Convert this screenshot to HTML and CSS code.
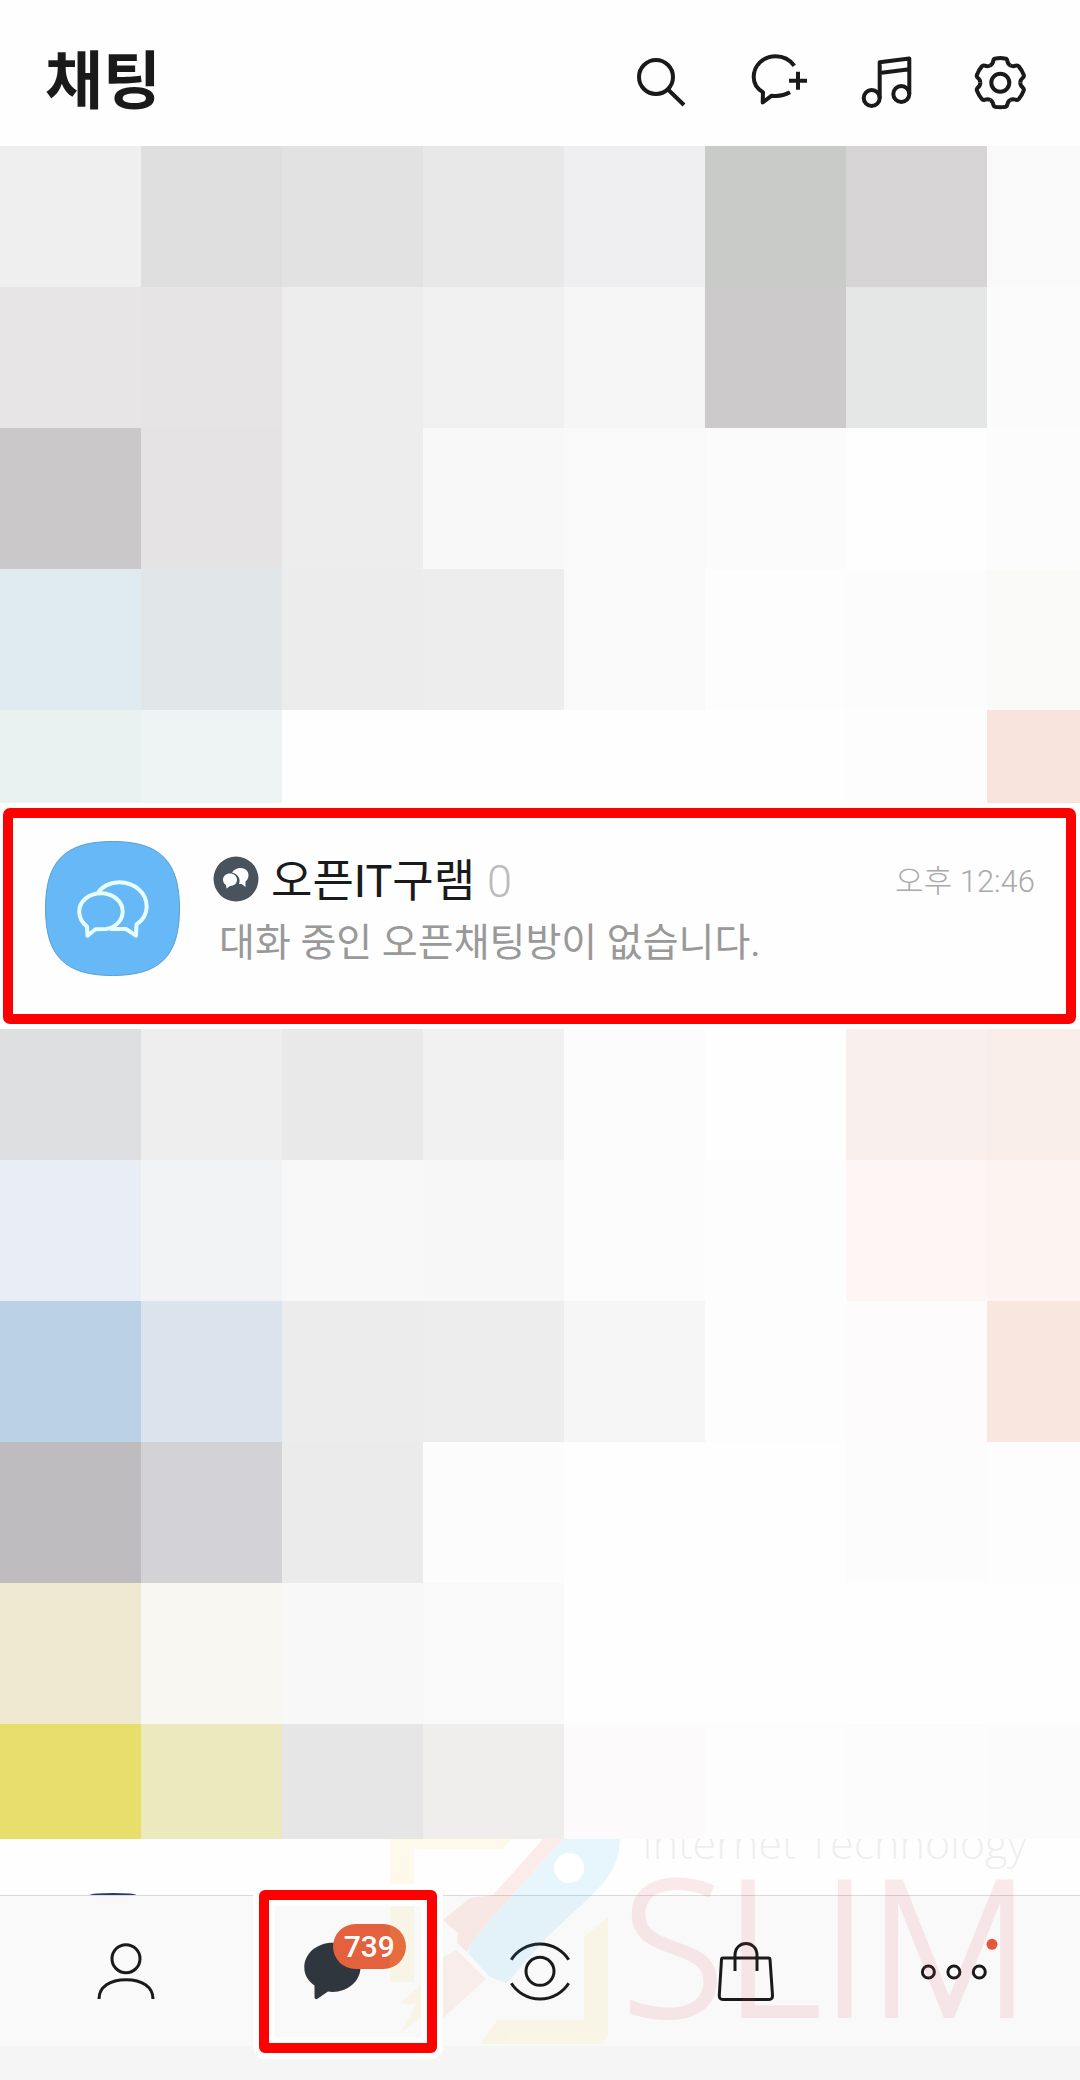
FILE: index.html
```html
<!DOCTYPE html>
<html lang="ko">
<head>
<meta charset="utf-8">
<meta name="viewport" content="width=device-width, initial-scale=1">
<title>채팅</title>
<link rel="stylesheet" href="styles.css">
</head>
<body>
<header class="header">
  <h1 class="title">채팅</h1>
  <div class="actions">
    <button class="action" aria-label="검색">
      <svg viewBox="0 0 112 112"><circle cx="48" cy="51" r="17"/><path d="M60 63.500L76 79"/></svg>
    </button>
    <button class="action" aria-label="새 채팅">
      <svg viewBox="0 0 112 112"><path stroke-linejoin="round" d="M74.300 39.700C70 34 63.500 30.300 55.700 30.300C43 30.300 33.700 39.500 33.700 51C33.700 57.500 37.500 63 43 66.200L42.700 76.500L51.700 69.700C58 70.800 65 69 70 66.300"/><path d="M69 54.700H87M78 45.700V63.700"/></svg>
    </button>
    <button class="action" aria-label="음악">
      <svg viewBox="0 0 112 112"><circle cx="39.700" cy="72" r="8"/><circle cx="69.300" cy="68" r="8"/><path stroke-linejoin="round" d="M47.700 72V36.300L77.300 32.500V68M47.700 47L77.300 43.300"/></svg>
    </button>
    <button class="action" aria-label="설정">
      <svg viewBox="0 0 112 112">
        <defs><path id="tooth" d="M-10 -17.300C-7.800 -18.500 -7.300 -20 -7 -22Q-6.600 -24 -4.600 -24.200Q0 -25 4.600 -24.200Q6.600 -24 7 -22C7.300 -20 7.800 -18.500 10 -17.300"/></defs>
        <g transform="translate(56.300 56.700)">
          <use href="#tooth"/><use href="#tooth" transform="rotate(60)"/><use href="#tooth" transform="rotate(120)"/><use href="#tooth" transform="rotate(180)"/><use href="#tooth" transform="rotate(240)"/><use href="#tooth" transform="rotate(300)"/>
          <circle r="9"/>
        </g>
      </svg>
    </button>
  </div>
</header>

<main>
  <div class="mosaic mosaic-top" aria-hidden="true">
    <i style="background:#efefef"></i><i style="background:#dedede"></i><i style="background:#e2e2e2"></i><i style="background:#e8e8e8"></i><i style="background:#efeff1"></i><i style="background:#c9cbc9"></i><i style="background:#d7d4d5"></i><i style="background:#f9f9f9"></i>
    <i style="background:#e7e5e6"></i><i style="background:#e6e4e5"></i><i style="background:#ededed"></i><i style="background:#f0f0f0"></i><i style="background:#f6f6f6"></i><i style="background:#cdcacb"></i><i style="background:#e5e7e6"></i><i style="background:#fbfbfb"></i>
    <i style="background:#cac8c9"></i><i style="background:#e5e3e4"></i><i style="background:#ededed"></i><i style="background:#f8f8f8"></i><i style="background:#f9f9f9"></i><i style="background:#fbfbfb"></i><i style="background:#fefefe"></i><i style="background:#fdfcfd"></i>
    <i style="background:#e0ebf1"></i><i style="background:#e1e7e9"></i><i style="background:#ececec"></i><i style="background:#ededed"></i><i style="background:#f9f9f9"></i><i style="background:#fdfdfd"></i><i style="background:#fcfcfc"></i><i style="background:#fafaf8"></i>
    <i style="background:#e9f2f0"></i><i style="background:#eef3f4"></i><i style="background:#fefefe"></i><i style="background:#fefefe"></i><i style="background:#fefefe"></i><i style="background:#fefefe"></i><i style="background:#fdfdfd"></i><i style="background:#f8e4dd"></i>
  </div>

  <a class="chat" href="#">
    <svg class="avatar" viewBox="0 0 136 136" aria-hidden="true">
      <path class="avatar-shape" d="M67.500 .5C115 .5 134.500 20 134.500 67.500S115 134.500 67.500 134.500S.5 115 .5 67.500S20 .5 67.500 .5Z"/>
      <path class="avatar-line" d="M53.300 51.500C57 45.500 65 41.300 74.300 41.300C89.500 41.300 101.700 52 101.700 65.700C101.700 73 98 79 91.500 83.300L91 94.700L81 88H65"/>
      <path class="avatar-line" d="M42.500 94.700L42 85.500C37.500 82 34.200 76.500 34.200 70.500C34.200 60.500 43.800 52.300 56 52.300S77.700 60.500 77.700 70.500C77.700 80 69.500 87 61 88L50.500 88.300Z"/>
    </svg>
    <div class="chat-body">
      <div class="chat-top">
        <svg class="open-mark" viewBox="0 0 46 46" aria-hidden="true">
          <circle cx="23" cy="23" r="22.500" fill="#49535e"/>
          <path fill="#fff" d="M19 16.500C21 13.500 24 12 27.500 12C32 12 35.500 15 35.500 19C35.500 22 34.500 24 32.500 25.500L32.500 31L28.500 28H26C28 23 25 18 19 16.500Z"/>
          <path fill="#fff" d="M17 17.500C21 17.500 24 20 24 23.800S21 30 17 30L13.500 32.500L13 29C11 27.800 10 26 10 23.800C10 20 13 17.500 17 17.500Z"/>
        </svg>
        <span class="chat-name">오픈IT구램</span>
        <span class="chat-count">0</span>
        <time class="chat-time">오후 12:46</time>
      </div>
      <p class="chat-preview">대화 중인 오픈채팅방이 없습니다.</p>
    </div>
  </a>

  <div class="mosaic mosaic-bottom" aria-hidden="true">
    <i style="background:#dddfe0"></i><i style="background:#eeeeee"></i><i style="background:#e9e9e9"></i><i style="background:#f1f1f1"></i><i style="background:#fcfcfc"></i><i style="background:#fefefe"></i><i style="background:#f9efec"></i><i style="background:#f9edea"></i>
    <i style="background:#e8edf6"></i><i style="background:#f2f3f5"></i><i style="background:#f8f8f8"></i><i style="background:#f7f7f7"></i><i style="background:#fcfcfc"></i><i style="background:#fdfdfd"></i><i style="background:#fef6f4"></i><i style="background:#fdf4f1"></i>
    <i style="background:#bbd1e6"></i><i style="background:#dbe3ec"></i><i style="background:#ececec"></i><i style="background:#ededed"></i><i style="background:#f6f6f6"></i><i style="background:#fdfdfd"></i><i style="background:#fdfbfc"></i><i style="background:#f8e6df"></i>
    <i style="background:#bfbcbf"></i><i style="background:#d3d2d7"></i><i style="background:#ebebeb"></i><i style="background:#fcfcfc"></i><i style="background:#fefefe"></i><i style="background:#fefefe"></i><i style="background:#fcfcfc"></i><i style="background:#fdfdfd"></i>
    <i style="background:#f0e9d2"></i><i style="background:#f9f7f1"></i><i style="background:#f8f8f8"></i><i style="background:#f9f9f9"></i><i style="background:#fefefe"></i><i style="background:#fefefe"></i><i style="background:#fefefe"></i><i style="background:#fefefe"></i>
    <i style="background:#e8de6b"></i><i style="background:#ede9be"></i><i style="background:#e6e6e6"></i><i style="background:#efeeec"></i><i style="background:#fdfafb"></i><i style="background:#fdfdfd"></i><i style="background:#fcfcfc"></i><i style="background:#fbfbfb"></i>
  </div>
</main>

<footer class="footer">
  <div class="peek"><span class="peek-avatar"></span></div>
  <nav class="tabs">
    <a class="tab" href="#" aria-label="친구">
      <svg viewBox="0 0 100 100"><circle cx="50" cy="37.700" r="14"/><path d="M23 78C23 66 34 58.700 50 58.700S77 66 77 78"/></svg>
    </a>
    <a class="tab" href="#" aria-label="채팅">
      <svg viewBox="0 0 100 100"><path class="bubble" d="M49.500 21.700C65 21.700 77.500 32.500 77.500 46.300S65 71 49.500 71L45 70.500L34.500 77.800Q31.500 79 31.500 76V64.500C25 60 21.300 54 21.300 46.300C21.300 32.500 34 21.700 49.500 21.700Z"/></svg>
      <span class="badge">739</span>
      <span class="marker"></span>
    </a>
    <a class="tab" href="#" aria-label="뷰">
      <svg viewBox="0 0 100 100"><circle cx="50" cy="50.300" r="14"/><path d="M21.300 38.700A34 34 0 0 1 78.700 38.700M21.300 62.300A34 34 0 0 0 78.700 62.300"/></svg>
    </a>
    <a class="tab" href="#" aria-label="쇼핑">
      <svg viewBox="0 0 100 100"><path stroke-linejoin="round" d="M26 37H71.500Q73 37 73 38.500L75.500 74Q75.800 78.500 72 78.500H26Q22 78.500 22.300 74L24.500 38.500Q24.500 37 26 37Z"/><path d="M38 50V34.500C38 18.500 60 18.500 60 34.500V50"/></svg>
    </a>
    <a class="tab" href="#" aria-label="더보기">
      <svg viewBox="0 0 100 100"><circle cx="24.400" cy="51" r="6"/><circle cx="49.900" cy="51" r="6"/><circle cx="75.300" cy="51" r="6"/><circle class="dot" cx="88" cy="23.300" r="5.500"/></svg>
    </a>
  </nav>
  <div class="gesture-bar"></div>
  <svg class="watermark" viewBox="0 0 660 207" aria-hidden="true">
    <g fill="#ffd54a" opacity=".1">
      <path d="M10 0H131L123 10H34V143H10Z"/>
      <path d="M117 181H204V98L228 78V193Q228 205 216 205H100Z"/>
      <path d="M20 164L41 146V160L30 166ZM21 194L38 160L41 158V178Z"/>
    </g>
    <g opacity=".1">
      <path fill="#f15a3c" d="M163 0H183L122 68L92 103L87 113L77 104L78 94L63 81L90 59L113 56Z"/>
      <path fill="#f58a5a" d="M77 111L106 140L63 179V118Z"/>
      <path fill="#29b6f6" d="M183 0H240C239 26 228 40 212 56L167 98L127 144L110 138L88 114L92 103L122 68Z"/>
    </g>
    <circle cx="189" cy="29" r="15" fill="#fff"/>
    <text class="wm-small" x="262" y="20">Internet Technology</text>
    <text class="wm-large" x="242" y="177">SLIM</text>
  </svg>
</footer>
</body>
</html>
```
FILE: styles.css
```css
* {
  box-sizing: border-box;
}

body {
  margin: 0;
  background: #fefefe;
  color: #1a1a1a;
  font-family: Roboto, "Noto Sans CJK KR", sans-serif;
}

a {
  color: inherit;
  text-decoration: none;
}

.header {
  display: flex;
  align-items: center;
  justify-content: space-between;
  height: 146px;
  padding: 18px 24px 0 45px;
}

.title {
  margin: 0;
  font-size: 63px;
  line-height: 80px;
  font-weight: 700;
}

.actions {
  display: flex;
}

.action {
  width: 112px;
  height: 112px;
  padding: 0;
  border: 0;
  background: none;
}

.action svg {
  display: block;
  fill: none;
  stroke: #1a1a1a;
  stroke-width: 4;
}

/* Blurred-out conversations */
.mosaic {
  display: grid;
  grid-template-columns: repeat(7, 141fr) 93fr;
}

.mosaic-top {
  grid-template-rows: repeat(4, 141px) 93px;
}

.mosaic-bottom {
  grid-template-rows: 131px repeat(4, 141px) 115px;
}

.chat {
  display: flex;
  gap: 32px;
  margin: 5px 4px 5px 3px;
  padding: 23px 31px 37px 32px;
  border: 10px solid #fe0000;
  border-radius: 7px;
}

.avatar {
  flex: none;
  width: 136px;
  height: 136px;
}

.avatar-shape {
  fill: #66b8f7;
  stroke: #5a9fd3;
}

.avatar-line {
  fill: none;
  stroke: #e9fdff;
  stroke-width: 4;
  stroke-linejoin: round;
}

.chat-body {
  flex: 1;
  padding-top: 8px;
}

.chat-top {
  display: flex;
  height: 64px;
  line-height: 66px;
}

.open-mark {
  flex: none;
  width: 46px;
  height: 46px;
  margin: 7px 12px 0 0;
}

.chat-name {
  font-size: 45px;
}

.chat-count {
  margin-left: 12px;
  color: #bbb;
  font-size: 45px;
  font-weight: 300;
}

.chat-time {
  margin-left: auto;
  color: #aaa;
  font-size: 31px;
  font-weight: 300;
}

.chat-preview {
  margin: 0;
  padding-left: 6px;
  color: #999;
  font-size: 39px;
  line-height: 60px;
}

.footer {
  position: relative;
}

.peek {
  display: flex;
  align-items: flex-end;
  height: 56px;
  padding-left: 90px;
}

.peek-avatar {
  width: 46px;
  height: 2px;
  border-radius: 23px 23px 0 0 / 2px 2px 0 0;
  background: #2c3a6b;
}

.tabs {
  display: flex;
  height: 151px;
  padding: 0 22px;
  border-top: 1px solid #d9d9d9;
  background: #f9f9f9;
}

.tab {
  position: relative;
  display: flex;
  flex: 1;
  align-items: center;
  justify-content: center;
}

.tab svg {
  width: 100px;
  height: 100px;
  fill: none;
  stroke: #1a1a1a;
  stroke-width: 3;
}

.tab .bubble {
  fill: #30363e;
  stroke: none;
}

.tab .dot {
  fill: #e3573a;
  stroke: none;
}

.badge {
  position: absolute;
  top: 28px;
  left: 50%;
  width: 73px;
  height: 45px;
  border-radius: 23px;
  background: #e3613d;
  color: #fff;
  font-size: 30px;
  font-weight: 500;
  line-height: 45px;
  text-align: center;
}

.marker {
  position: absolute;
  z-index: 2;
  inset: -6px -1px -7px 30px;
  border: 10px solid #fe0000;
  border-radius: 6px;
  box-shadow: 0 0 0 6px #fefefe, inset 0 0 0 6px #fefefe;
}

.gesture-bar {
  height: 34px;
  background: #f5f5f5;
}

.watermark {
  position: absolute;
  z-index: 1;
  top: 0;
  left: 50%;
  width: 660px;
  height: 207px;
  margin-left: -160px;
  overflow: hidden;
  pointer-events: none;
}

.wm-small,
.wm-large {
  font-family: "Open Sans", sans-serif;
  font-weight: 300;
}

.wm-small {
  fill: #000;
  font-size: 43px;
  opacity: .06;
}

.wm-large {
  fill: #e04050;
  stroke: #e04050;
  stroke-width: 4;
  font-size: 188px;
  opacity: .1;
}
```
